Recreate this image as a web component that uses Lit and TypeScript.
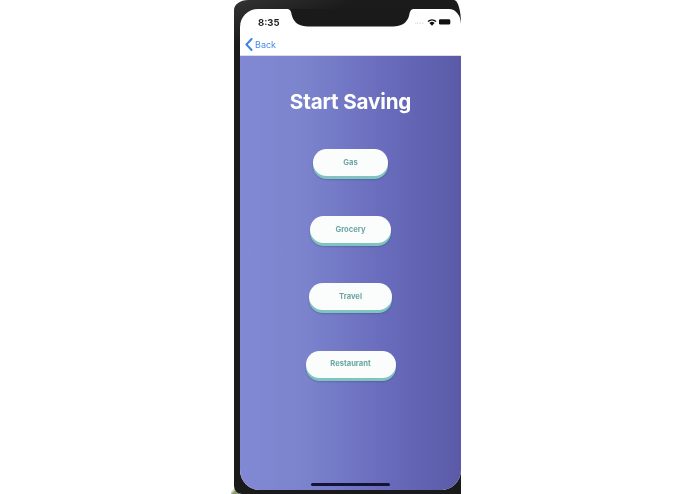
import { LitElement, html, css } from "lit";
import { customElement } from "lit/decorators.js";

@customElement("app-root")
export class AppRoot extends LitElement {
  static styles = css`
    :host {
      display: block;
      width: 695px;
      height: 494px;
      background: #fff;
      overflow: hidden;
      font-family: Inter, "Liberation Sans", sans-serif;
    }
    .page {
      height: 494px;
      padding-left: 234px;
      box-sizing: border-box;
      position: relative;
    }
    .speck {
      position: absolute;
      left: 231px;
      top: 486px;
      width: 8px;
      height: 8px;
      background: linear-gradient(135deg, #fff 30%, #8e9c72 60%);
    }
    .frame {
      position: relative;
      width: 227px;
      height: 494px;
      box-sizing: border-box;
      padding: 9px 0 4px 6px;
      background: linear-gradient(160deg, #333 0%, #1b1b1b 8%, #1a1a1a 100%);
      border-radius: 14px 7px 0 8px / 10px 24px 0 8px;
      overflow: hidden;
    }
    .screen {
      position: relative;
      height: 100%;
      display: flex;
      flex-direction: column;
      background: #fff;
      border-radius: 18px 12px 20px 20px / 18px 15px 20px 20px;
      overflow: hidden;
      filter: blur(0.35px);
    }
    .notch {
      position: absolute;
      left: 48px;
      top: 0;
      width: 125px;
      height: 18px;
    }
    .status {
      height: 27px;
      flex: none;
      display: flex;
      align-items: center;
      justify-content: space-between;
      padding: 0 10px 1px 18px;
      box-sizing: border-box;
    }
    .time {
      font-size: 9.5px;
      font-weight: 700;
      color: #1c1c1e;
    }
    .sys {
      display: block;
    }
    .nav {
      height: 20px;
      flex: none;
      box-sizing: border-box;
      display: flex;
      align-items: center;
      gap: 2px;
      padding: 0 0 3px 5px;
      border-bottom: 1px solid #dcdce4;
      color: #4a8be6;
      font-size: 9px;
    }
    .content {
      flex: 1;
      position: relative;
      display: flex;
      flex-direction: column;
      align-items: center;
      background: linear-gradient(90deg, #8289d4 0%, #7b83cd 30%, #696cbc 65%, #5a5aa8 100%);
    }
    h1 {
      margin: 33px 0 0;
      font-size: 20.6px;
      line-height: 26px;
      font-weight: 700;
      color: #fff;
      letter-spacing: -0.15px;
    }
    .buttons {
      margin-top: 34px;
      display: flex;
      flex-direction: column;
      align-items: center;
      gap: 40.2px;
    }
    .btn {
      height: 27px;
      border: 0;
      border-radius: 15px;
      background: #fbfdfd;
      color: #6aa5a2;
      font: 700 7.6px Inter, "Liberation Sans", sans-serif;
      display: flex;
      align-items: center;
      justify-content: center;
      padding: 0 0 1px;
      box-sizing: border-box;
      box-shadow: 0 3px 0 #7fc4bf, 0 3.500px 1.500px rgba(40, 40, 90, 0.4);
    }
    .home {
      position: absolute;
      left: 71px;
      bottom: 4px;
      width: 79px;
      height: 3px;
      border-radius: 2px;
      background: #14143a;
    }
  `;

  private items: Array<[string, number]> = [
    ["Gas", 75],
    ["Grocery", 81],
    ["Travel", 83],
    ["Restaurant", 90],
  ];

  render() {
    return html`
      <div class="page">
        <div class="speck"></div>
        <div class="frame">
          <div class="screen">
            <div class="status">
              <span class="time">8:35</span>
              <svg class="sys" width="36" height="8" viewBox="0 0 36 8">
                <g fill="#b5b5b5">
                  <circle cx="0" cy="5" r=".6"></circle>
                  <circle cx="2.600" cy="5" r=".6"></circle>
                  <circle cx="5.200" cy="5" r=".6"></circle>
                  <circle cx="7.800" cy="5" r=".6"></circle>
                </g>
                <path d="M12.500 3a6.800 6.800 0 0 1 9 0l-.9 1a5.500 5.500 0 0 0-7.200 0zM14.400 5a3.900 3.900 0 0 1 5.200 0L17 7.800z" fill="#111"></path>
                <rect x="24" y="1.300" width="11.200" height="5.200" rx="1.200" fill="#111"></rect>
                <rect x="35.300" y="3.100" width=".7" height="1.600" fill="#999"></rect>
              </svg>
            </div>
            <div class="nav">
              <svg width="8" height="13" viewBox="0 0 8 13">
                <path d="M6.600 1 1.400 6.500l5.200 5.500" fill="none" stroke="#3b82e6" stroke-width="1.900" stroke-linecap="round" stroke-linejoin="round"></path>
              </svg>
              <span>Back</span>
            </div>
            <div class="content">
              <h1>Start Saving</h1>
              <div class="buttons">
                ${this.items.map(
                  ([label, w]) => html`<button class="btn" style="width:${w}px">${label}</button>`
                )}
              </div>
              <div class="home"></div>
            </div>
            <svg class="notch" viewBox="0 0 125 18">
              <path d="M0 0H125C122 1 122 3 121 7 119 14 113 17.500 105 17.500H20C12 17.500 6 14 4 7 3 3 3 1 0 0Z" fill="#1a1a1a"></path>
            </svg>
          </div>
        </div>
      </div>
    `;
  }
}
